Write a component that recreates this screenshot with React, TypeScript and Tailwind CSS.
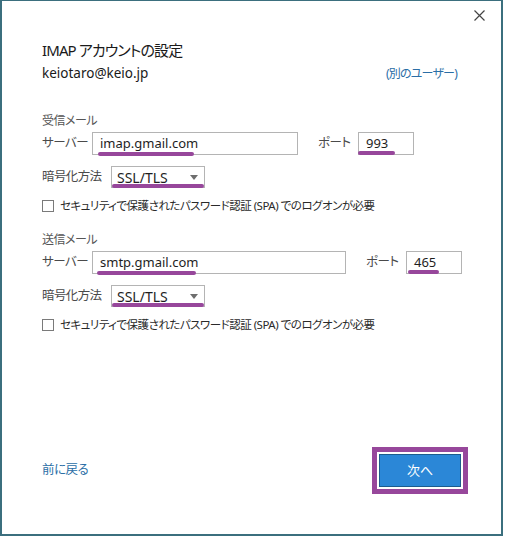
import React from 'react';

const font = "font-['Noto_Sans','Noto_Sans_CJK_JP',sans-serif] [font-feature-settings:'palt']";

// purple annotation bar drawn over the field
const Mark = ({ left, top, width }: { left: number; top: number; width: number }) => (
  <span
    className="absolute h-[4px] rounded-full bg-[#97479b]"
    style={{ left, top, width }}
  />
);

interface ServerRowProps {
  host: string;
  port: string;
  hostWidth: number;
  hostMark: { left: number; width: number };
  portMark: { left: number; width: number };
}

const ServerRow: React.FC<ServerRowProps> = ({ host, port, hostWidth, hostMark, portMark }) => (
  <div className="flex items-center h-[23px]">
    <span className="w-[50px] shrink-0 whitespace-nowrap text-[12.5px] tracking-[-0.5px] text-[#4a4a4a]">サーバー</span>
    <div
      className="relative shrink-0 h-[23px] border border-[#b4b4b4] pl-[7px] flex items-center text-[13px] text-[#1e1e1e]"
      style={{ width: hostWidth }}
    >
      {host}
      <Mark left={hostMark.left} top={19} width={hostMark.width} />
    </div>
    <span className="ml-[20px] w-[40px] shrink-0 whitespace-nowrap text-[12.5px] tracking-[-0.5px] text-[#4a4a4a]">ポート</span>
    <div className="relative shrink-0 w-[56px] h-[23px] border border-[#b4b4b4] pl-[7px] flex items-center text-[13px] text-[#1e1e1e]">
      {port}
      <Mark left={portMark.left} top={18} width={portMark.width} />
    </div>
  </div>
);

const EncryptRow = () => (
  <div className="flex items-center h-[22px] mt-[11px]">
    <span className="w-[69px] shrink-0 whitespace-nowrap text-[12.5px] tracking-[-0.6px] text-[#4a4a4a]">暗号化方法</span>
    <div className="relative shrink-0 w-[94px] h-[22px] border border-[#b4b4b4] pl-[5px] pr-[6px] flex items-center justify-between text-[14px] text-[#1e1e1e]">
      <span>SSL/TLS</span>
      <svg width="8" height="5" viewBox="0 0 8 5">
        <path d="M0 0h8L4 5z" fill="#6e6e6e" />
      </svg>
      <Mark left={0} top={17} width={92} />
    </div>
  </div>
);

const SpaCheck = () => (
  <div className="flex items-center h-[16px] mt-[10px]">
    <span className="w-[12px] h-[12px] shrink-0 border border-[#7a7a7a] bg-white" />
    <span className="ml-[6px] whitespace-nowrap text-[11.5px] tracking-[-0.5px] text-[#2a2a2a]">
      セキュリティで保護されたパスワード認証 (SPA) でのログオンが必要
    </span>
  </div>
);

export default function App() {
  return (
    <div className={`w-[505px] h-[539px] bg-white ${font}`}>
      <div className="w-[503px] h-[536px] border-x-2 border-b-2 border-t border-[#3b6f7e] flex flex-col">
        <div className="flex justify-end pr-[16px] mt-[9px]">
          <svg width="11" height="11" viewBox="0 0 11 11">
            <path d="M0.5 0.5l10 10M10.5 0.5l-10 10" stroke="#444" strokeWidth="1.2" />
          </svg>
        </div>

        <div className="pl-[40px] pr-[44px]">
          <h1 className="mt-[18px] text-[15px] tracking-[-0.9px] leading-[22px] text-[#1a1a1a]">IMAP アカウントの設定</h1>
          <div className="mt-[2px] flex items-end justify-between">
            <span className="text-[13.5px] leading-[20px] text-[#1a1a1a]">keiotaro@keio.jp</span>
            <span className="text-[12px] tracking-[-0.8px] leading-[18px] text-[#2b6ea6]">(別のユーザー)</span>
          </div>

          <div className="mt-[29px] text-[12px] tracking-[-0.5px] leading-[18px] text-[#555]">受信メール</div>
          <div className="mt-[2px]">
            <ServerRow
              host="imap.gmail.com"
              port="993"
              hostWidth={206}
              hostMark={{ left: 5, width: 96 }}
              portMark={{ left: -1, width: 37 }}
            />
          </div>
          <EncryptRow />
          <SpaCheck />

          <div className="mt-[17px] text-[12px] tracking-[-0.5px] leading-[18px] text-[#555]">送信メール</div>
          <div className="mt-[2px]">
            <ServerRow
              host="smtp.gmail.com"
              port="465"
              hostWidth={254}
              hostMark={{ left: 4, width: 99 }}
              portMark={{ left: 1, width: 31 }}
            />
          </div>
          <EncryptRow />
          <SpaCheck />
        </div>

        <div className="mt-auto mb-[40px] pl-[40px] pr-[33px] flex items-center justify-between">
          <span className="text-[12.5px] tracking-[-0.5px] text-[#2b6ea6]">前に戻る</span>
          <div className="border-[5px] border-[#97479b] p-[2px]">
            <button className="w-[82px] h-[33px] bg-[#2b87d7] border border-[#1d5c8c] text-[13px] text-white">
              次へ
            </button>
          </div>
        </div>
      </div>
    </div>
  );
}
